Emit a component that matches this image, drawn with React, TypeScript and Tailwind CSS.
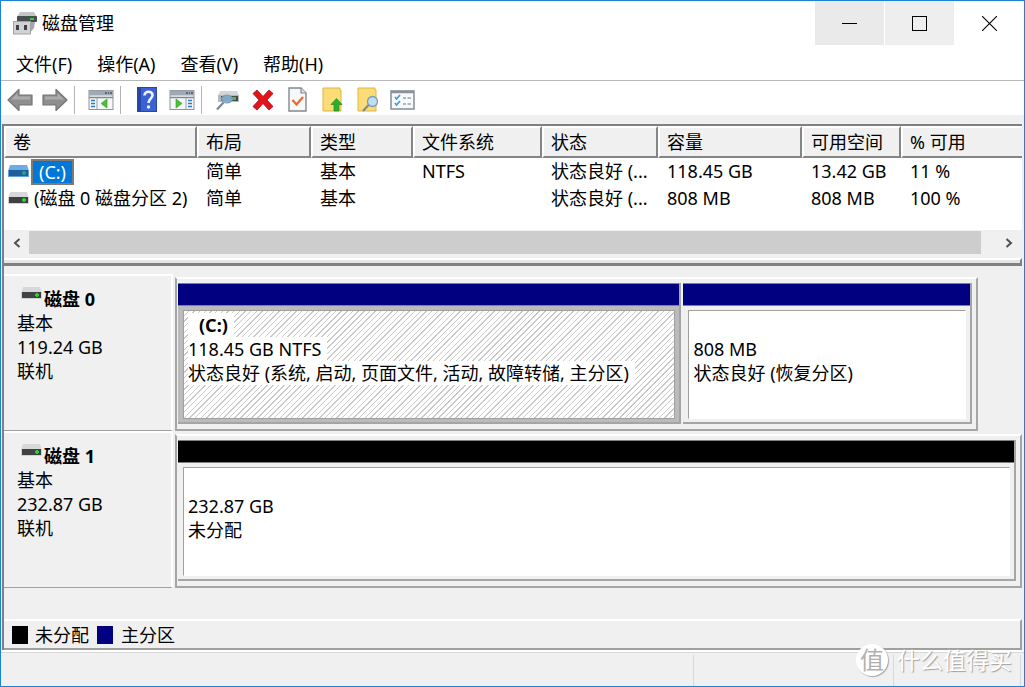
import type { ReactNode } from "react";

interface Volume {
    name: string;
    layout: string;
    type: string;
    fs: string;
    status: string;
    capacity: string;
    free: string;
    percent: string;
    selected?: boolean;
}

interface Partition {
    label?: string;
    size: string;
    status: string;
    kind: "primary" | "unallocated";
    grow: number;
    selected?: boolean;
}

interface Disk {
    name: string;
    type: string;
    size: string;
    status: string;
    short?: boolean;
    partitions: Partition[];
}

const menus = ["文件(F)", "操作(A)", "查看(V)", "帮助(H)"];

const columns = [
    { title: "卷", width: "w-[193px]" },
    { title: "布局", width: "w-[114px]" },
    { title: "类型", width: "w-[102px]" },
    { title: "文件系统", width: "w-[129px]" },
    { title: "状态", width: "w-[116px]" },
    { title: "容量", width: "w-[144px]" },
    { title: "可用空间", width: "w-[99px]" },
    { title: "% 可用", width: "" },
];

const volumes: Volume[] = [
    {
        name: "(C:)",
        layout: "简单",
        type: "基本",
        fs: "NTFS",
        status: "状态良好 (...",
        capacity: "118.45 GB",
        free: "13.42 GB",
        percent: "11 %",
        selected: true,
    },
    {
        name: "(磁盘 0 磁盘分区 2)",
        layout: "简单",
        type: "基本",
        fs: "",
        status: "状态良好 (...",
        capacity: "808 MB",
        free: "808 MB",
        percent: "100 %",
    },
];

const disks: Disk[] = [
    {
        name: "磁盘 0",
        type: "基本",
        size: "119.24 GB",
        status: "联机",
        short: true,
        partitions: [
            {
                label: "(C:)",
                size: "118.45 GB NTFS",
                status: "状态良好 (系统, 启动, 页面文件, 活动, 故障转储, 主分区)",
                kind: "primary",
                grow: 7,
                selected: true,
            },
            { size: "808 MB", status: "状态良好 (恢复分区)", kind: "primary", grow: 4 },
        ],
    },
    {
        name: "磁盘 1",
        type: "基本",
        size: "232.87 GB",
        status: "联机",
        partitions: [{ size: "232.87 GB", status: "未分配", kind: "unallocated", grow: 1 }],
    },
];

function DriveIcon({ selected }: { selected?: boolean }) {
    return (
        <svg width="21" height="13" viewBox="0 0 21 13" className="shrink-0" aria-hidden="true">
            <path d="M2 0h17l2 6H0z" fill={selected ? "#6aaee6" : "#d6d9dc"} />
            <rect x="0" y="5" width="21" height="7" fill={selected ? "#5ea3dc" : "#d0d2d4"} />
            <rect x="1" y="5" width="19" height="6" fill={selected ? "#1d5f98" : "#3f4142"} />
            <rect x="14" y="7" width="4" height="2" fill={selected ? "#23a08a" : "#27d427"} />
            <rect x="15" y="6" width="2" height="4" fill={selected ? "#23a08a" : "#27d427"} />
        </svg>
    );
}

function AppIcon() {
    return (
        <svg width="24" height="23" viewBox="0 0 24 23" aria-hidden="true">
            <path d="M7 0h14l3 5H4z" fill="#c3c6c9" />
            <rect x="4" y="4" width="20" height="6" rx="1" fill="#4a4d50" />
            <rect x="17" y="6" width="4" height="2" fill="#2bd62b" />
            <path d="M14 10h8l-1 6-5 6h-2z" fill="#a4a6a9" />
            <rect x="0.5" y="9.5" width="17" height="12.5" fill="#d0d1d3" stroke="#a0a2a5" />
            <rect x="3" y="13" width="3" height="5" fill="#3f4143" />
            <rect x="11" y="13" width="3" height="5" fill="#3f4143" />
        </svg>
    );
}

function ArrowIcon({ forward }: { forward?: boolean }) {
    return (
        <svg width="26" height="24" viewBox="0 0 26 24" aria-hidden="true">
            <path
                d={forward ? "M25 12L14 1.500V7H1v10h13v5.500z" : "M1 12L12 1.500V7h13v10H12v5.500z"}
                fill="#8f8f8f"
                stroke="#757575"
                strokeWidth="1.200"
                strokeLinejoin="round"
            />
            <path
                d={forward ? "M22 11.500L15.500 5v3.500H3v3z" : "M4 11.500L10.500 5v3.500H23v3z"}
                fill="#acacac"
            />
        </svg>
    );
}

function PaneIcon({ flipped }: { flipped?: boolean }) {
    return (
        <svg width="26" height="20" viewBox="0 0 26 20" aria-hidden="true">
            <rect x="1" y="0.5" width="24" height="19" fill="#f4f6f8" stroke="#8d949c" />
            <rect x="1" y="0.5" width="24" height="5" fill="#9fa8b3" />
            <path d="M17 3h2M20 3h1M22 3h2" stroke="#4b535c" strokeWidth="1.5" />
            <path d="M1 7.5h24" stroke="#7f8993" strokeWidth="1.5" />
            {flipped ? (
                <>
                    <path d="M7 9v9l6-4.5z" fill="#4bbf31" stroke="#35982a" strokeWidth="0.6" />
                    <path d="M17 8v11" stroke="#98a1ab" />
                    <path d="M19 10.5h4M19 13.5h4M19 16.5h4" stroke="#3478c8" strokeWidth="1.6" />
                </>
            ) : (
                <>
                    <path d="M19 9v9l-6-4.5z" fill="#4bbf31" stroke="#35982a" strokeWidth="0.6" />
                    <path d="M9 8v11" stroke="#98a1ab" />
                    <path d="M3 10.5h4M3 13.5h4M3 16.5h4" stroke="#3478c8" strokeWidth="1.6" />
                </>
            )}
        </svg>
    );
}

function HelpIcon() {
    return (
        <svg width="20" height="25" viewBox="0 0 20 25" aria-hidden="true">
            <rect x="0.5" y="0.5" width="19" height="24" fill="#3a62d4" stroke="#2a479f" />
            <rect x="1" y="1" width="3" height="23" fill="#2545a8" />
            <path
                d="M7.500 8.500C7.500 3.500 15.500 3.500 15.500 8.300C15.500 11.800 11.500 11.500 11.500 16"
                fill="none"
                stroke="#f2f5ff"
                strokeWidth="2.600"
            />
            <circle cx="11.500" cy="20" r="1.700" fill="#f2f5ff" />
        </svg>
    );
}

function RescanIcon() {
    return (
        <svg width="24" height="20" viewBox="0 0 24 20" aria-hidden="true">
            <path d="M4 1h17l2 5H2z" fill="#d4d7da" />
            <rect x="2" y="5" width="21" height="7" fill="#b6babd" />
            <rect x="5" y="6" width="17" height="5" fill="#44494c" />
            <rect x="16" y="7" width="4" height="3" fill="#29d129" />
            <path d="M7.500 12.500L1 19.500" stroke="#7f868d" strokeWidth="2.200" />
            <ellipse cx="11" cy="9" rx="5.500" ry="4" fill="#86b2d0" fillOpacity="0.900" stroke="#7b98ad" />
        </svg>
    );
}

function DeleteIcon() {
    return (
        <svg width="22" height="22" viewBox="0 0 22 22" aria-hidden="true">
            <path
                d="M5 1l6 6.500L17 1l4 3.500L15 11l6 6.500L17 21l-6-6.500L5 21l-4-3.500L7 11 1 4.500z"
                fill="#e3131b"
                stroke="#a90d12"
                strokeWidth="0.800"
            />
        </svg>
    );
}

function PropertiesIcon() {
    return (
        <svg width="19" height="25" viewBox="0 0 19 25" aria-hidden="true">
            <path d="M1 1h12l5 5v18H1z" fill="#f7f8fa" stroke="#85888c" strokeWidth="1.400" />
            <path d="M13 1v5h5" fill="#dfe2e5" stroke="#85888c" strokeWidth="1.200" />
            <path d="M4.500 13l4 4.500L15 10" fill="none" stroke="#ee6a32" strokeWidth="2.300" />
        </svg>
    );
}

function FolderUpIcon() {
    return (
        <svg width="21" height="25" viewBox="0 0 21 25" aria-hidden="true">
            <path d="M1 2V1h17v2h1v21H1z" fill="#fbdc76" stroke="#e0b542" />
            <path d="M14.500 11.500l5.500 6h-3V24h-5v-6.500H9z" fill="#2fae2b" stroke="#1f8d1e" strokeWidth="0.700" />
        </svg>
    );
}

function FolderSearchIcon() {
    return (
        <svg width="22" height="25" viewBox="0 0 22 25" aria-hidden="true">
            <path d="M1 2V1h17v2h1v21H1z" fill="#fbdc76" stroke="#e0b542" />
            <path d="M11.500 18L6 24" stroke="#848a8f" strokeWidth="2.200" />
            <circle cx="15.500" cy="14.500" r="5" fill="#bddff3" stroke="#7d9caf" strokeWidth="1.300" />
        </svg>
    );
}

function ListIcon() {
    return (
        <svg width="25" height="20" viewBox="0 0 25 20" aria-hidden="true">
            <rect x="1" y="1" width="23" height="18" fill="#f7f9fb" stroke="#7f858c" strokeWidth="1.400" />
            <path d="M1 2h23" stroke="#8a929b" strokeWidth="2.500" />
            <path d="M5 7l1.500 2L10 5M5 13l1.500 2L10 11" fill="none" stroke="#3d94df" strokeWidth="1.600" />
            <path d="M13 8h3M17.500 8h3.500M13 14h3M17.500 14h3.500" stroke="#9aa1a8" strokeWidth="1.600" />
        </svg>
    );
}

function ToolButton({ label, children }: { label: string; children: ReactNode }) {
    return (
        <button aria-label={label} className="flex h-8 w-[35px] items-center justify-center">
            {children}
        </button>
    );
}

function Separator() {
    return <div className="ml-[2px] mr-2 h-7 w-px bg-[#b4b4b4]" />;
}

function TitleBar() {
    return (
        <header className="flex h-11 items-start bg-white">
            <div className="flex flex-1 items-center gap-[5px] pl-3 pt-[10px]">
                <AppIcon />
                <h1 className="leading-6">磁盘管理</h1>
            </div>
            <button
                aria-label="最小化"
                className="mr-px flex h-11 w-[69px] items-center justify-center bg-[#eaeaea]"
            >
                <span className="h-px w-[15px] bg-black" />
            </button>
            <button
                aria-label="最大化"
                className="flex h-11 w-[69px] items-center justify-center bg-[#eeeeee]"
            >
                <span className="size-[15px] border border-black" />
            </button>
            <button aria-label="关闭" className="flex h-11 w-[70px] items-center justify-center">
                <svg width="15" height="15" viewBox="0 0 15 15" aria-hidden="true">
                    <path d="M0 0l15 15M15 0L0 15" stroke="#000" strokeWidth="1.100" />
                </svg>
            </button>
        </header>
    );
}

function Toolbar() {
    return (
        <div className="flex h-[35px] items-center border-t border-[#b9b9b9] bg-white pl-px pt-[3px]">
            <ToolButton label="后退"><ArrowIcon /></ToolButton>
            <ToolButton label="前进"><ArrowIcon forward /></ToolButton>
            <Separator />
            <ToolButton label="显示/隐藏控制台树"><PaneIcon /></ToolButton>
            <Separator />
            <ToolButton label="帮助"><HelpIcon /></ToolButton>
            <ToolButton label="显示/隐藏操作窗格"><PaneIcon flipped /></ToolButton>
            <Separator />
            <ToolButton label="重新扫描磁盘"><RescanIcon /></ToolButton>
            <ToolButton label="删除"><DeleteIcon /></ToolButton>
            <ToolButton label="属性"><PropertiesIcon /></ToolButton>
            <ToolButton label="打开"><FolderUpIcon /></ToolButton>
            <ToolButton label="浏览"><FolderSearchIcon /></ToolButton>
            <ToolButton label="设置"><ListIcon /></ToolButton>
        </div>
    );
}

function VolumeTable() {
    return (
        <div className="bg-white pb-[18px]">
            <table className="w-full table-fixed border-separate border-spacing-0 text-left">
                <thead>
                    <tr>
                        {columns.map((c) => (
                            <th
                                key={c.title}
                                className={`h-8 border-2 border-t-white border-l-white border-r-[#858585] border-b-[#858585] bg-[#f0f0f0] p-0 pl-[7px] font-normal last:border-r-0 ${c.width}`}
                            >
                                {c.title}
                            </th>
                        ))}
                    </tr>
                </thead>
                <tbody>
                    {volumes.map((v) => (
                        <tr key={v.name} className="h-[27px] leading-[27px] whitespace-nowrap">
                            <td className="p-0 pl-1">
                                <div className="flex items-center">
                                    <DriveIcon selected={v.selected} />
                                    {v.selected ? (
                                        <span className="ml-[2px] border-2 border-[#7f7a74] bg-[#0078d7] px-[6px] leading-[22px] text-white">
                                            {v.name}
                                        </span>
                                    ) : (
                                        <span className="ml-[5px]">{v.name}</span>
                                    )}
                                </div>
                            </td>
                            <td className="p-0 pl-[9px]">{v.layout}</td>
                            <td className="p-0 pl-[9px]">{v.type}</td>
                            <td className="p-0 pl-[9px]">{v.fs}</td>
                            <td className="p-0 pl-[9px]">{v.status}</td>
                            <td className="p-0 pl-[9px]">{v.capacity}</td>
                            <td className="p-0 pl-[9px]">{v.free}</td>
                            <td className="p-0 pl-[9px]">{v.percent}</td>
                        </tr>
                    ))}
                </tbody>
            </table>
        </div>
    );
}

function ScrollBar() {
    return (
        <div className="flex h-6 border-t border-[#f0f0f0]">
            <button aria-label="向左滚动" className="flex w-[25px] items-center justify-center">
                <svg width="8" height="10" viewBox="0 0 8 10" aria-hidden="true">
                    <path d="M6.500 1L2 5l4.500 4" fill="none" stroke="#505050" strokeWidth="2" />
                </svg>
            </button>
            <div className="mr-[15px] flex-1 bg-[#cdcdcd]" />
            <button aria-label="向右滚动" className="flex w-[26px] items-center justify-center">
                <svg width="8" height="10" viewBox="0 0 8 10" aria-hidden="true">
                    <path d="M1.500 1L6 5 1.500 9" fill="none" stroke="#505050" strokeWidth="2" />
                </svg>
            </button>
        </div>
    );
}

function PartitionBox({ partition }: { partition: Partition }) {
    const { label, size, status, kind, grow, selected } = partition;
    return (
        <div
            style={{ flexGrow: grow }}
            className="flex basis-0 flex-col border-r-2 border-b-2 border-[#a5a5a5] not-first:ml-[2px]"
        >
            <div
                className={`h-[23px] border-y border-[#808080] ${kind === "primary" ? "bg-[#000080]" : "bg-black"}`}
            />
            <div className={`flex-1 pt-1 pr-1 pb-[3px] pl-[5px] ${selected ? "bg-[#bbbbbb]" : "bg-[#f0f0f0]"}`}>
                <div
                    className={`h-[109px] border border-[#a0a0a0] pt-[2px] pl-1 leading-6 ${
                        selected
                            ? "bg-white bg-[repeating-linear-gradient(135deg,#ffffff_0px,#ffffff_3px,#cacaca_3px,#cacaca_4px)]"
                            : "border-r-white border-b-white bg-white"
                    }`}
                >
                    <p className="h-6 font-bold">
                        {label && <span className="inline-block bg-white pr-[6px] pl-[11px]">{label}</span>}
                    </p>
                    <p>
                        <span className={selected ? "inline-block bg-white pr-[6px]" : ""}>{size}</span>
                    </p>
                    <p>
                        <span className={selected ? "inline-block bg-white pr-[6px]" : ""}>{status}</span>
                    </p>
                </div>
            </div>
        </div>
    );
}

function DiskRow({ disk }: { disk: Disk }) {
    return (
        <section className="flex">
            <div className="mr-[2px] w-[169px] border-t-2 border-r-2 border-b border-t-white border-r-white border-b-[#a0a0a0] pt-[11px] pl-[13px] leading-6">
                <h2 className="flex gap-[2px] pl-1 font-bold">
                    <DriveIcon />
                    {disk.name}
                </h2>
                <p>{disk.type}</p>
                <p>{disk.size}</p>
                <p>{disk.status}</p>
            </div>
            <div
                className={`mt-[3px] flex flex-1 border-2 border-t-white border-r-[#a5a5a5] border-b-[#a5a5a5] border-l-[#a5a5a5] pt-1 pr-1 pb-[5px] pl-px ${
                    disk.short ? "mr-11" : ""
                }`}
            >
                {disk.partitions.map((p) => (
                    <PartitionBox key={p.size} partition={p} />
                ))}
            </div>
        </section>
    );
}

function Legend() {
    return (
        <div className="flex h-[31px] items-center border-t-2 border-r-2 border-b-2 border-t-white border-r-[#a0a0a0] border-b-[#a0a0a0] pl-2">
            <span className="h-[18px] w-4 bg-black" />
            <span className="ml-[7px]">未分配</span>
            <span className="ml-2 h-[18px] w-4 bg-[#000080]" />
            <span className="ml-2">主分区</span>
        </div>
    );
}

function StatusBar() {
    return (
        <footer className="flex h-[34px] border-t border-[#d9d9d9] pt-[2px]">
            <div className="flex-1" />
            <div className="w-[200px] border-l border-[#d9d9d9]" />
            <div className="mr-[3px] w-32 border-x border-[#d9d9d9]" />
        </footer>
    );
}

function Watermark() {
    return (
        <div className="absolute right-3 bottom-2 flex items-center gap-[9px] text-white">
            <span className="flex size-8 items-center justify-center rounded-full bg-white text-2xl text-[#b0b0b0] shadow-[1px_1px_1px_#aaaaaa]">
                值
            </span>
            <span className="text-[23px] leading-9 [text-shadow:1px_1px_1px_#a0a0a0]">什么值得买</span>
        </div>
    );
}

export default function App() {
    return (
        <div className="relative flex min-h-screen flex-col border border-[#1883d7] bg-[#f0f0f0] font-['Noto_Sans','Noto_Sans_CJK_SC',sans-serif] text-[18px] leading-6 text-black">
            <TitleBar />
            <nav className="flex h-[35px] items-center gap-[25px] bg-white pt-[2px] pl-[15px]">
                {menus.map((m) => (
                    <button key={m}>{m}</button>
                ))}
            </nav>
            <Toolbar />
            <main className="mt-[9px] mr-[2px] ml-px flex flex-1 flex-col border-t-2 border-l-2 border-[#808080]">
                <VolumeTable />
                <ScrollBar />
                <div className="mt-1 h-2 border-t-2 border-r-2 border-b-[3px] border-t-white border-r-[#808080] border-b-[#808080] bg-[#e6e6e6]" />
                <div className="flex flex-1 flex-col pt-2">
                    {disks.map((d) => (
                        <DiskRow key={d.name} disk={d} />
                    ))}
                </div>
                <Legend />
            </main>
            <div className="h-[2px] bg-white" />
            <StatusBar />
            <Watermark />
        </div>
    );
}
